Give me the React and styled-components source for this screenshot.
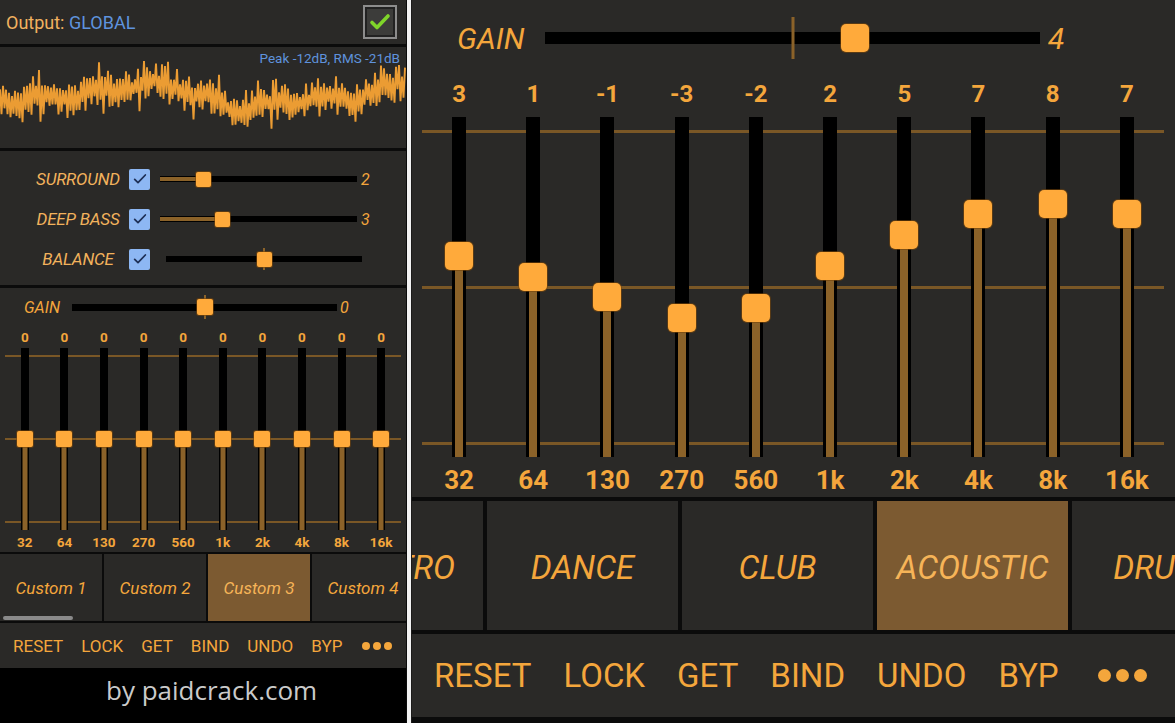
import React from 'react';
import styled, { createGlobalStyle } from 'styled-components';

const C = {
  bg: '#2a2927',
  black: '#0b0b0b',
  orange: '#f4a63c',
  thumb: '#ffaa3b',
  fill: '#8b6229',
  guide: '#7a5726',
  sel: '#7c5a31',
  blue: '#5f93dd',
};

const Global = createGlobalStyle`
  html, body { margin: 0; padding: 0; background: #f2f2f2; }
  body { font-family: Roboto, "Liberation Sans", sans-serif; }
  #root { width: 1175px; height: 723px; }
`;

const Screen = styled.div`
  display: flex;
  gap: 4px;
  width: 1175px;
  height: 723px;
  overflow: hidden;
  background: #f2f2f2;
`;

const Panel = styled.div`
  display: flex;
  flex-direction: column;
  flex: none;
  width: ${p => p.$w}px;
  height: 723px;
  background: ${C.bg};
  border-right: ${p => (p.$edge ? `1px solid ${C.black}` : 'none')};
  border-left: ${p => (p.$lead ? '1px solid #1c1b1a' : 'none')};
  box-sizing: border-box;
  overflow: hidden;
`;

const Rule = styled.div`
  flex: none;
  height: ${p => p.$h}px;
  background: ${C.black};
`;

/* ---------- header ---------- */
const Header = styled.div`
  flex: none;
  height: 44px;
  display: flex;
  align-items: center;
  justify-content: space-between;
  padding: 0 9px 0 6px;
  font-size: 18px;
`;
const OutLabel = styled.span`
  color: #f1b260;
`;
const OutValue = styled.span`
  color: ${C.blue};
`;
const BigCheck = styled.div`
  width: 34px;
  height: 34px;
  box-sizing: border-box;
  border: 2px solid #8d8d8d;
  background: #3c3c3a;
  box-shadow: inset 0 0 0 2px #222;
  display: flex;
  align-items: center;
  justify-content: center;
`;

/* ---------- waveform ---------- */
const WaveBox = styled.div`
  flex: none;
  position: relative;
  height: 101px;
`;
const PeakText = styled.div`
  position: absolute;
  top: 3px;
  right: 6px;
  font-size: 13.5px;
  color: ${C.blue};
`;
const WaveSvg = styled.svg`
  display: block;
  width: 406px;
  height: 101px;
`;

/* ---------- effects ---------- */
const Effects = styled.div`
  flex: none;
  height: 134px;
  box-sizing: border-box;
  padding-top: 8px;
  display: flex;
  flex-direction: column;
`;
const EffectRow = styled.div`
  height: 40px;
  display: flex;
  align-items: center;
`;
const EffectLabel = styled.div`
  width: 84px;
  margin-left: 36px;
  text-align: center;
  font-style: italic;
  font-size: 17px;
  letter-spacing: -0.2px;
  color: #f2b25c;
  white-space: nowrap;
`;
const BlueCheck = styled.div`
  flex: none;
  width: 21px;
  height: 21px;
  margin-left: 9px;
  margin-right: ${p => p.$mr}px;
  border-radius: 2px;
  background: #8db7f3;
  display: flex;
  align-items: center;
  justify-content: center;
`;
const SideValue = styled.div`
  margin-left: ${p => p.$ml}px;
  font-style: italic;
  font-size: ${p => p.$fs}px;
  color: ${C.orange};
`;

/* ---------- horizontal slider ---------- */
const HTrack = styled.div`
  position: relative;
  flex: none;
  width: ${p => p.$w}px;
  height: ${p => p.$h}px;
  background: #000;
`;
const HFill = styled.div`
  position: absolute;
  left: 0;
  top: 50%;
  height: ${p => p.$h}px;
  transform: translateY(-50%);
  background: ${C.fill};
`;
const HTick = styled.div`
  position: absolute;
  left: 50%;
  top: 50%;
  width: ${p => p.$w}px;
  height: ${p => p.$h}px;
  transform: translate(-50%, -50%);
  background: ${C.fill};
`;
const Thumb = styled.div`
  position: absolute;
  width: ${p => p.$s}px;
  height: ${p => p.$s}px;
  border-radius: ${p => p.$r}px;
  background: ${C.thumb};
  box-shadow: 0 0 0 1px rgba(120, 70, 10, 0.6);
`;

function HSlider({ w, h, s, r = 2, f, fill, fh, tick }) {
  const cx = s / 2 + f * (w - s);
  return (
    <HTrack $w={w} $h={h}>
      {fill && <HFill $h={fh} style={{ width: cx }} />}
      {tick && <HTick $w={tick[0]} $h={tick[1]} />}
      <Thumb $s={s} $r={r} style={{ left: cx - s / 2, top: h / 2 - s / 2 }} />
    </HTrack>
  );
}

/* ---------- EQ ---------- */
const EqSection = styled.div`
  flex: none;
  height: ${p => p.$h}px;
  display: flex;
  flex-direction: column;
`;
const GainRow = styled.div`
  flex: none;
  height: ${p => p.$h}px;
  display: flex;
  align-items: center;
  padding-left: ${p => p.$pl}px;
`;
const GainLabel = styled.div`
  width: ${p => p.$w}px;
  flex: none;
  font-style: italic;
  font-size: ${p => p.$fs}px;
  color: ${C.orange};
`;
const EqGrid = styled.div`
  display: grid;
  grid-template-columns: repeat(10, 1fr);
  width: ${p => p.$w}px;
  margin-left: ${p => p.$ml}px;
  margin-top: ${p => p.$mt}px;
  background-image: linear-gradient(${C.guide}, ${C.guide}),
    linear-gradient(${C.guide}, ${C.guide}), linear-gradient(${C.guide}, ${C.guide});
  background-repeat: no-repeat;
  background-size: 100% ${p => p.$gt}px;
  background-position: ${p => p.$gp.map(y => `0 ${y}px`).join(', ')};
`;
const Band = styled.div`
  display: flex;
  flex-direction: column;
  align-items: center;
`;
const BandText = styled.div`
  font-weight: 700;
  font-size: ${p => p.$fs}px;
  line-height: ${p => p.$lh}px;
  height: ${p => p.$lh}px;
  color: ${C.orange};
  white-space: nowrap;
`;
const VTrack = styled.div`
  position: relative;
  width: ${p => p.$w}px;
  height: ${p => p.$h}px;
  margin: ${p => p.$mt}px 0 ${p => p.$mb}px;
  background: #000;
`;
const VFill = styled.div`
  position: absolute;
  left: 50%;
  bottom: 0;
  width: ${p => p.$w}px;
  transform: translateX(-50%);
  background: ${C.fill};
`;

const FREQS = ['32', '64', '130', '270', '560', '1k', '2k', '4k', '8k', '16k'];

function Equalizer({ cfg, values, gain }) {
  const inset = cfg.thumb / 2;
  const span = cfg.trackH - 2 * inset;
  const t0 = cfg.valLh + cfg.gapTop;
  const gp = [t0 + inset, t0 + cfg.trackH / 2, t0 + cfg.trackH - inset].map(
    y => Math.round(y - cfg.gt / 2)
  );
  return (
    <EqSection $h={cfg.h}>
      <GainRow $h={cfg.gainH} $pl={cfg.gainPl}>
        <GainLabel $w={cfg.gainLw} $fs={cfg.gainFs}>GAIN</GainLabel>
        <HSlider
          w={cfg.gainW}
          h={cfg.gainTh}
          s={cfg.gainS}
          r={cfg.thumbR}
          f={(gain + 15) / 30}
          tick={cfg.gainTick}
        />
        <SideValue $ml={cfg.gainVm} $fs={cfg.gainFs}>{gain}</SideValue>
      </GainRow>
      <EqGrid $w={cfg.colW * 10} $ml={cfg.ml} $mt={cfg.gridMt} $gt={cfg.gt} $gp={gp}>
        {values.map((v, i) => {
          const cy = inset + (1 - (v + 15) / 30) * span;
          return (
            <Band key={i}>
              <BandText $fs={cfg.valFs} $lh={cfg.valLh}>{v}</BandText>
              <VTrack $w={cfg.trackW} $h={cfg.trackH} $mt={cfg.gapTop} $mb={cfg.gapBot}>
                <VFill $w={cfg.fillW} style={{ height: cfg.trackH - cy }} />
                <Thumb
                  $s={cfg.thumb}
                  $r={cfg.thumbR}
                  style={{ top: cy - inset, left: cfg.trackW / 2 - inset }}
                />
              </VTrack>
              <BandText $fs={cfg.labFs} $lh={cfg.labLh}>{FREQS[i]}</BandText>
            </Band>
          );
        })}
      </EqGrid>
    </EqSection>
  );
}

const SMALL = {
  h: 264, gainH: 38, gainPl: 24, gainLw: 48, gainFs: 16, gainW: 265, gainTh: 7, gainS: 16,
  gainTick: [2, 24], gainVm: 3, gridMt: 4,
  colW: 39.6, ml: 5, gt: 2,
  valFs: 13.5, valLh: 14, gapTop: 4, trackW: 8, trackH: 182, fillW: 5, thumb: 16, thumbR: 2,
  gapBot: 5, labFs: 13.5, labLh: 14,
};
const BIG = {
  h: 497, gainH: 76, gainPl: 45, gainLw: 88, gainFs: 30, gainW: 495, gainTh: 12, gainS: 28,
  gainTick: [3, 42], gainVm: 8, gridMt: 5,
  colW: 74.2, ml: 10, gt: 3,
  valFs: 24, valLh: 26, gapTop: 10, trackW: 14, trackH: 340, fillW: 8, thumb: 28, thumbR: 5,
  gapBot: 9, labFs: 26, labLh: 28,
};

/* ---------- presets ---------- */
const PresetStrip = styled.div`
  position: relative;
  flex: none;
  height: ${p => p.$h}px;
  display: flex;
  overflow: hidden;
  background: ${C.black};
`;
const PresetTrack = styled.div`
  flex: none;
  display: flex;
  gap: ${p => p.$gap}px;
  margin-left: ${p => -p.$offset}px;
`;
const PresetTab = styled.div`
  flex: none;
  width: ${p => p.$w}px;
  display: flex;
  align-items: center;
  justify-content: center;
  padding-top: ${p => p.$dy}px;
  box-sizing: border-box;
  background: ${p => (p.$active ? C.sel : C.bg)};
  font-style: italic;
  font-size: ${p => p.$fs}px;
  color: ${p => (p.$active ? '#f6b458' : C.orange)};
  white-space: nowrap;
`;
const ScrollHint = styled.div`
  position: absolute;
  left: 3px;
  bottom: 1px;
  width: 70px;
  height: 4px;
  border-radius: 2px;
  background: #8a8a8a;
`;

/* ---------- action bar ---------- */
const ActionBar = styled.div`
  flex: none;
  height: ${p => p.$h}px;
  display: flex;
  align-items: center;
  gap: ${p => p.$gap}px;
  padding-left: ${p => p.$pl}px;
  font-size: ${p => p.$fs}px;
  color: ${C.orange};
`;
const Dots = styled.div`
  display: flex;
  gap: ${p => p.$gap}px;
  margin-left: ${p => p.$ml}px;
`;
const Dot = styled.span`
  width: ${p => p.$d}px;
  height: ${p => p.$d}px;
  border-radius: 50%;
  background: ${C.orange};
`;

const Watermark = styled.div`
  flex: 1;
  background: #000;
  padding: 5px 0 0 106px;
  font-family: "Open Sans", "DejaVu Sans", sans-serif;
  font-size: 26px;
  line-height: 34px;
  color: #cacaca;
`;
const BottomBlack = styled.div`
  flex: 1;
  background: ${C.black};
`;

/* ---------- waveform data ---------- */
function mulberry32(a) {
  return function () {
    a |= 0;
    a = (a + 0x6d2b79f5) | 0;
    let t = Math.imul(a ^ (a >>> 15), 1 | a);
    t = (t + Math.imul(t ^ (t >>> 7), 61 | t)) ^ t;
    return ((t ^ (t >>> 14)) >>> 0) / 4294967296;
  };
}
const KEYS = [
  [0, 54], [50, 52], [100, 45], [140, 36], [170, 38], [200, 48], [235, 63],
  [270, 58], [300, 53], [340, 50], [370, 47], [406, 31],
];
function baseAt(x) {
  for (let i = 0; i < KEYS.length - 1; i++) {
    const [x0, y0] = KEYS[i];
    const [x1, y1] = KEYS[i + 1];
    if (x >= x0 && x <= x1) return y0 + ((x - x0) / (x1 - x0)) * (y1 - y0);
  }
  return 40;
}
const WAVE = (() => {
  const rnd = mulberry32(11);
  const pts = [];
  let i = 0;
  for (let x = 0; x <= 406; x += 1.5, i++) {
    const b = baseAt(x) + Math.sin(x / 9) * 3;
    let a = 5 + rnd() * 13;
    if (rnd() < 0.1) a += 12;
    const dir = i % 2 ? 1 : -1;
    pts.push(`${x.toFixed(1)},${Math.max(14, Math.min(99, b + dir * a)).toFixed(1)}`);
  }
  return pts.join(' ');
})();

const Check = ({ size, color, w }) => (
  <svg width={size} height={size} viewBox="0 0 24 24" fill="none">
    <path d="M4 12.5l5 5L20 6" stroke={color} strokeWidth={w} strokeLinecap="round" strokeLinejoin="round" />
  </svg>
);

const ACTIONS = ['RESET', 'LOCK', 'GET', 'BIND', 'UNDO', 'BYP'];

function Actions({ h, gap, pl, fs, dot, dotGap, dotMl }) {
  return (
    <ActionBar $h={h} $gap={gap} $pl={pl} $fs={fs}>
      {ACTIONS.map(a => (
        <span key={a}>{a}</span>
      ))}
      <Dots $gap={dotGap} $ml={dotMl}>
        <Dot $d={dot} />
        <Dot $d={dot} />
        <Dot $d={dot} />
      </Dots>
    </ActionBar>
  );
}

export default function App() {
  return (
    <>
      <Global />
      <Screen>
        <Panel $w={407} $edge>
          <Header>
            <div>
              <OutLabel>Output: </OutLabel>
              <OutValue>GLOBAL</OutValue>
            </div>
            <BigCheck>
              <Check size={24} color="#7fd52a" w={3.6} />
            </BigCheck>
          </Header>
          <Rule $h={3} />
          <WaveBox>
            <WaveSvg viewBox="0 0 406 101">
              <polyline points={WAVE} fill="none" stroke="#eb9c33" strokeWidth="1.9" strokeLinejoin="bevel" />
            </WaveSvg>
            <PeakText>Peak -12dB, RMS -21dB</PeakText>
          </WaveBox>
          <Rule $h={3} />
          <Effects>
            <EffectRow>
              <EffectLabel>SURROUND</EffectLabel>
              <BlueCheck $mr={10}><Check size={16} color="#1d2f55" w={2.6} /></BlueCheck>
              <HSlider w={197} h={6} s={15} f={0.2} fill fh={4} />
              <SideValue $ml={4} $fs={16}>2</SideValue>
            </EffectRow>
            <EffectRow>
              <EffectLabel>DEEP BASS</EffectLabel>
              <BlueCheck $mr={10}><Check size={16} color="#1d2f55" w={2.6} /></BlueCheck>
              <HSlider w={197} h={6} s={15} f={0.3} fill fh={4} />
              <SideValue $ml={4} $fs={16}>3</SideValue>
            </EffectRow>
            <EffectRow>
              <EffectLabel>BALANCE</EffectLabel>
              <BlueCheck $mr={16}><Check size={16} color="#1d2f55" w={2.6} /></BlueCheck>
              <HSlider w={196} h={6} s={15} f={0.5} tick={[2, 22]} />
            </EffectRow>
          </Effects>
          <Rule $h={3} />
          <Equalizer cfg={SMALL} values={[0, 0, 0, 0, 0, 0, 0, 0, 0, 0]} gain={0} />
          <Rule $h={2} />
          <PresetStrip $h={67}>
            <PresetTrack $gap={2} $offset={0}>
              {['Custom 1', 'Custom 2', 'Custom 3', 'Custom 4'].map(n => (
                <PresetTab key={n} $w={102} $fs={17} $dy={1} $active={n === 'Custom 3'}>
                  {n}
                </PresetTab>
              ))}
            </PresetTrack>
            <ScrollHint />
          </PresetStrip>
          <Rule $h={2} />
          <Actions h={45} gap={18} pl={13} fs={17} dot={8} dotGap={3} dotMl={2} />
          <Watermark>by paidcrack.com</Watermark>
        </Panel>

        <Panel $w={764} $lead>
          <Equalizer cfg={BIG} values={[3, 1, -1, -3, -2, 2, 5, 7, 8, 7]} gain={4} />
          <Rule $h={4} />
          <PresetStrip $h={129}>
            <PresetTrack $gap={4} $offset={120}>
              {['ELECTRO', 'DANCE', 'CLUB', 'ACOUSTIC', 'DRUMS'].map(n => (
                <PresetTab key={n} $w={191} $fs={33} $dy={3} $active={n === 'ACOUSTIC'}>
                  {n}
                </PresetTab>
              ))}
            </PresetTrack>
          </PresetStrip>
          <Rule $h={4} />
          <Actions h={83} gap={32} pl={22} fs={33} dot={13} dotGap={5} dotMl={7} />
          <BottomBlack />
        </Panel>
      </Screen>
    </>
  );
}
